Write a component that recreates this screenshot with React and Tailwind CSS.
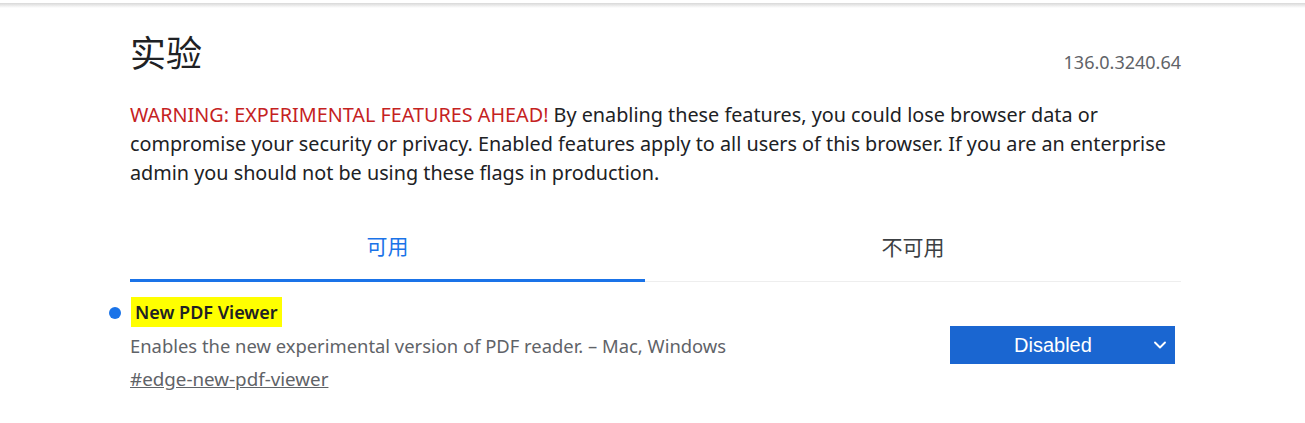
import { ChevronDown } from "lucide-react";

export default function App() {
  return (
    <div className="min-h-[423px] bg-white font-['Noto_Sans','Noto_Sans_CJK_SC',sans-serif]">
      <div className="h-[3px] bg-white" />
      <div className="h-[5px] bg-gradient-to-b from-[#d8d8d8] to-white" />
      <div className="ml-[130px] w-[1051px]">
        <div className="flex items-end justify-between pt-[22px]">
          <h1 className="text-[36px] leading-[48px] text-[#202124]">实验</h1>
          <span className="mb-[2px] text-[18px] text-[#5f6368]">136.0.3240.64</span>
        </div>
        <p className="mt-[22px] text-[19.8px] leading-[29px] text-[#202124]">
          <span className="text-[#c5221f]">WARNING: EXPERIMENTAL FEATURES AHEAD!</span> By enabling these features, you
          could lose browser data or compromise your security or privacy. Enabled features apply to all users of this
          browser. If you are an enterprise admin you should not be using these flags in production.
        </p>

        <div className="mt-[34px] flex border-b border-[#eeeeee]">
          <button className="-mb-px flex-auto border-b-[3px] border-[#1a73e8] pb-[18px] pt-[11px] text-[21px] leading-[29px] text-[#1a73e8]">
            可用
          </button>
          <button className="flex-auto pb-[18px] pt-[11px] text-[21px] leading-[29px] text-[#3c4043]">不可用</button>
        </div>

        <div className="mt-[15px] flex items-start justify-between">
          <div className="relative">
            <span className="absolute left-[-21px] top-[10px] h-[12px] w-[12px] rounded-full bg-[#1a73e8]" />
            <div className="ml-[1px] inline-block bg-[#ffff00] px-[4px] text-[18px] font-semibold leading-[30px] text-[#202124]">
              New PDF Viewer
            </div>
            <p className="mt-[4px] text-[18.4px] leading-[30px] text-[#5f6368]">
              Enables the new experimental version of PDF reader. – Mac, Windows
            </p>
            <a href="#" className="mt-[3px] block text-[18.8px] leading-[30px] text-[#5f6368] underline">
              #edge-new-pdf-viewer
            </a>
          </div>
          <div className="mr-[6px] mt-[29px] flex h-[38px] w-[225px] items-center bg-[#1a66d1] pl-[64px] pr-[5px] text-white">
            <span className="flex-1 font-['Liberation_Sans',sans-serif] text-[20px]">Disabled</span>
            <ChevronDown size={20} strokeWidth={2.25} />
          </div>
        </div>
      </div>
    </div>
  );
}
